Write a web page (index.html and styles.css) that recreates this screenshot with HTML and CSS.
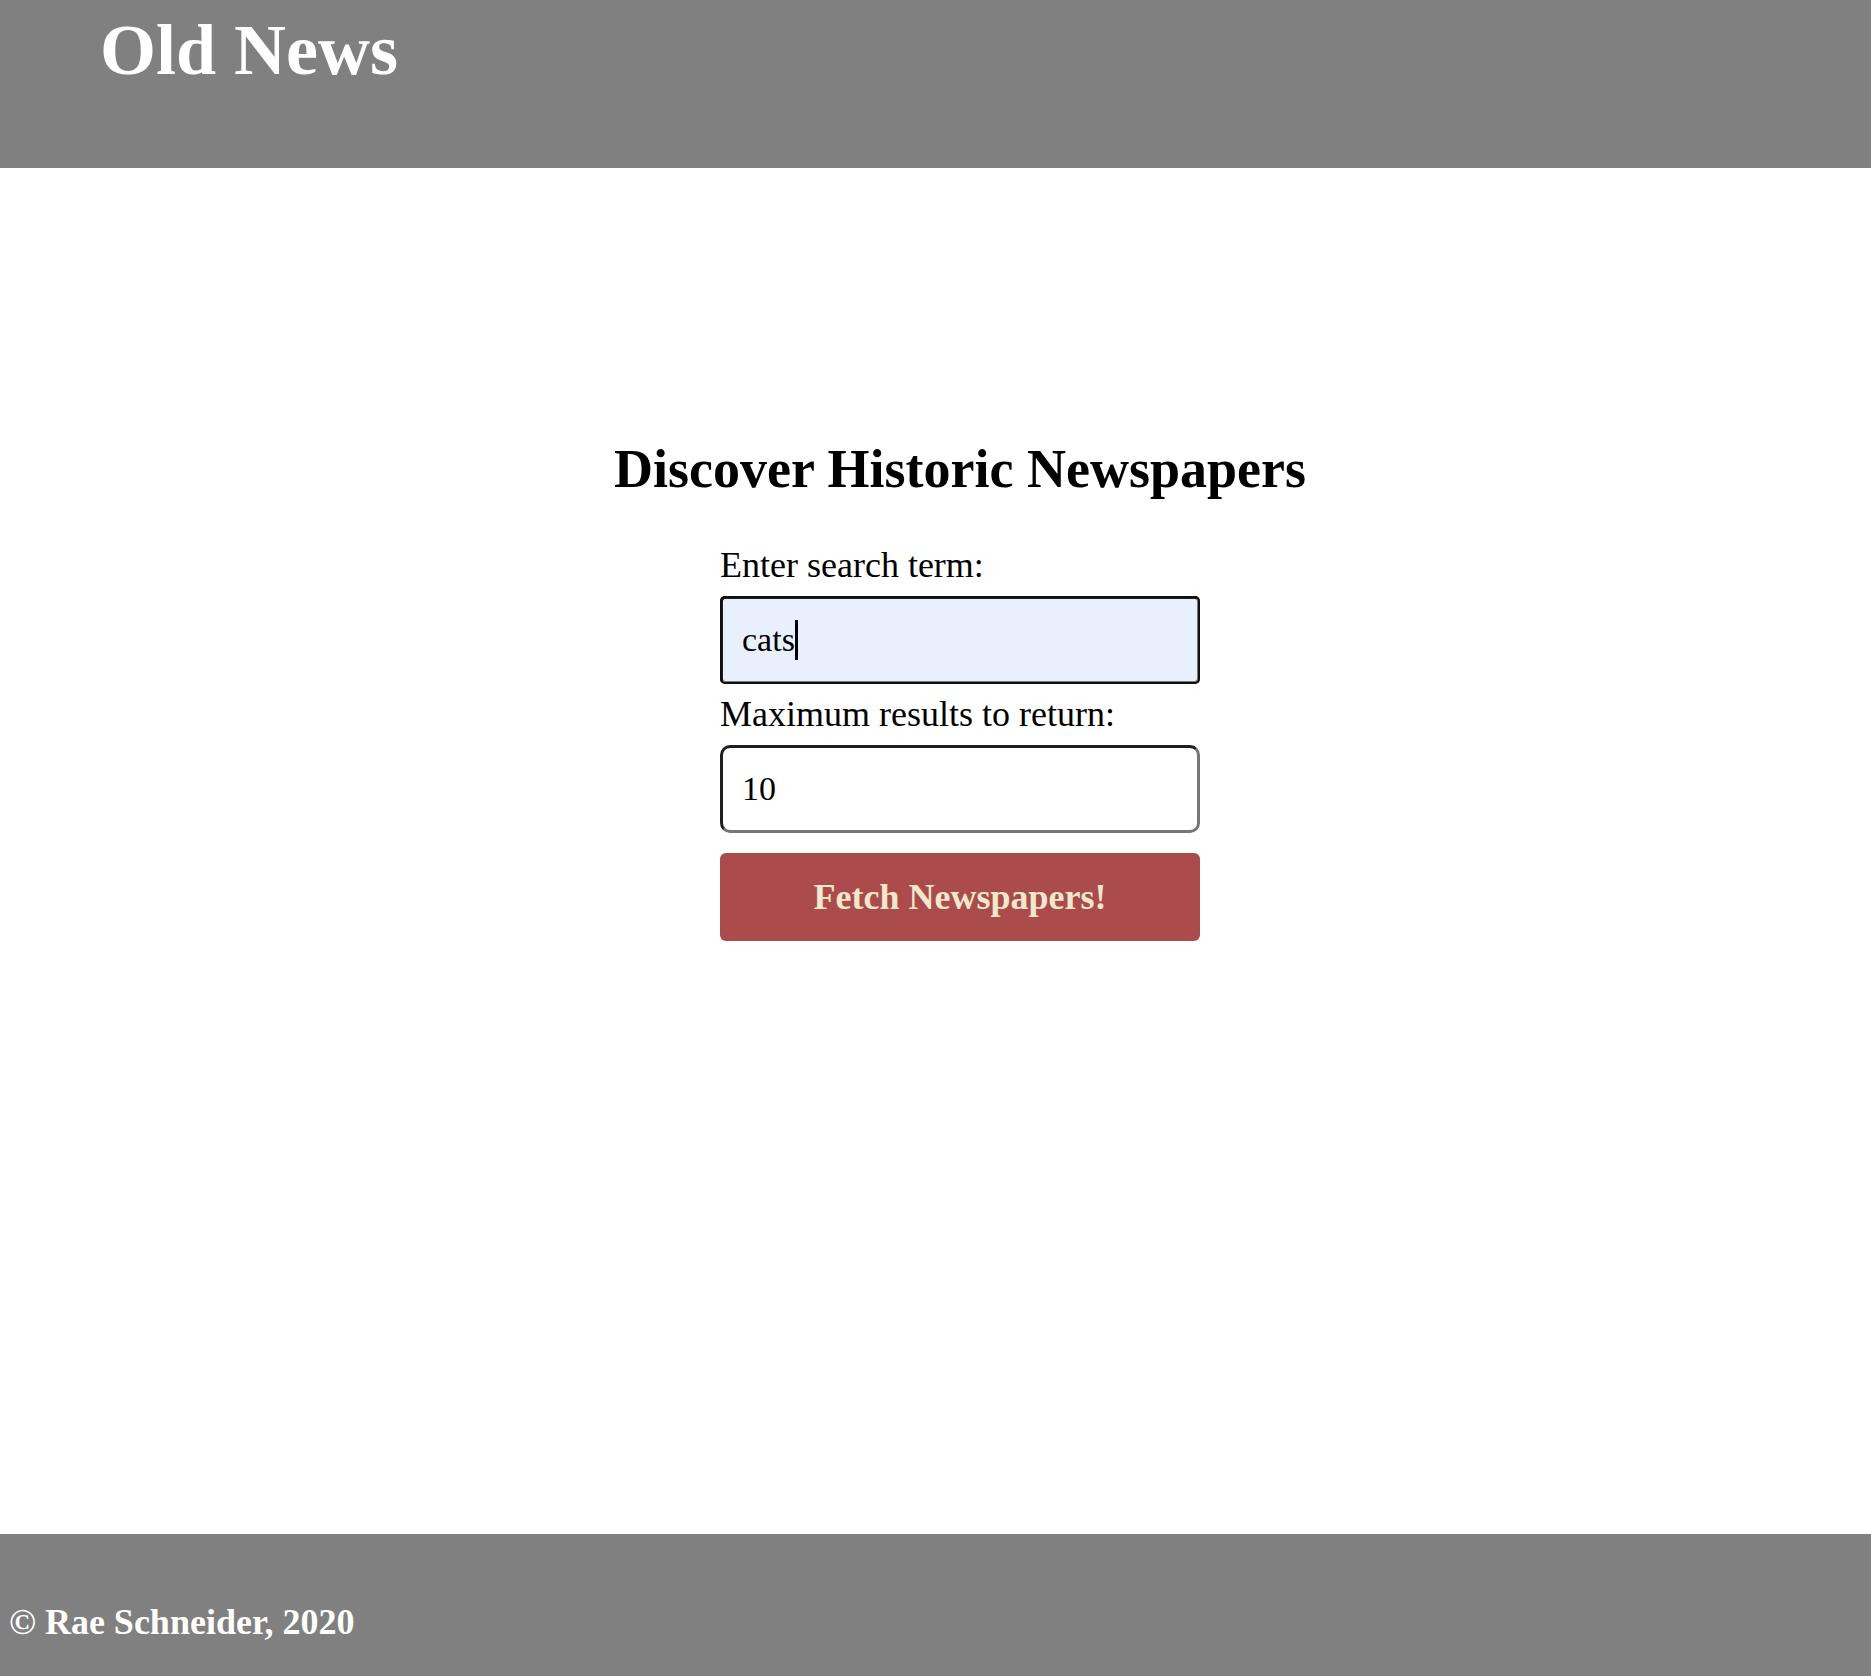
FILE: index.html
```html
<!DOCTYPE html>
<html lang="en">
<head>
<meta charset="utf-8">
<title>Old News</title>
<link rel="stylesheet" href="styles.css">
</head>
<body>
<header class="site-header">
  <h1 class="site-title">Old News</h1>
</header>
<main class="main">
  <h2 class="page-heading">Discover Historic Newspapers</h2>
  <form class="search-form">
    <label class="field-label field-label--first" for="term">Enter search term:</label>
    <div class="field-wrap">
      <input class="field field--focused" id="term" type="text" value="cats">
      <span class="caret"></span>
    </div>
    <label class="field-label" for="max">Maximum results to return:</label>
    <div class="field-wrap">
      <input class="field" id="max" type="text" value="10">
    </div>
    <button class="fetch-btn" type="button">Fetch Newspapers!</button>
  </form>
</main>
<footer class="site-footer">
  <p class="copyright">© Rae Schneider, 2020</p>
</footer>
</body>
</html>
```

FILE: styles.css
```css
html, body {
  margin: 0;
  padding: 0;
}

body {
  font-family: "Liberation Serif", "Times New Roman", serif;
  color: #000;
  background: #fff;
  min-height: 100vh;
  display: flex;
  flex-direction: column;
}

.site-header {
  background: #808080;
  height: 168px;
  box-sizing: border-box;
  padding: 9px 0 0 100px;
}

.site-title {
  margin: 0;
  font-size: 72px;
  line-height: 1.15;
  font-weight: bold;
  color: #fff;
}

.main {
  flex: 1;
  display: flex;
  flex-direction: column;
  align-items: center;
  padding: 270px 0 0 49px;
}

.page-heading {
  margin: 0 0 45px 0;
  font-size: 54px;
  line-height: 1.15;
  font-weight: bold;
}

.search-form {
  width: 480px;
  display: flex;
  flex-direction: column;
}

.field-label {
  font-size: 36px;
  line-height: 1.15;
  margin-bottom: 9px;
}

.field-label--first {
  margin-bottom: 10px;
}

.field-wrap {
  position: relative;
  margin-bottom: 10px;
}

.field {
  display: block;
  width: 100%;
  height: 88px;
  box-sizing: border-box;
  margin: 0;
  padding: 0 19px;
  font-family: "Liberation Serif", "Times New Roman", serif;
  font-size: 34px;
  color: #000;
  background: #fff;
  border-width: 3px;
  border-style: solid;
  border-color: #1f1f1f #767676 #767676 #1f1f1f;
  border-radius: 10px;
  outline: none;
  caret-color: transparent;
}

.field--focused {
  background: #e8f0fe;
  border-radius: 5px;
  outline: 2px solid #101010;
  outline-offset: -2px;
}

.caret {
  position: absolute;
  left: 75px;
  top: 24px;
  width: 3px;
  height: 40px;
  background: #000;
}

.fetch-btn {
  margin-top: 10px;
  height: 88px;
  width: 100%;
  border: none;
  border-radius: 6px;
  background: #ab4b4c;
  color: #f1e7cb;
  font-family: "Liberation Serif", "Times New Roman", serif;
  font-size: 36px;
  font-weight: bold;
  cursor: pointer;
}

.site-footer {
  background: #808080;
  height: 142px;
  box-sizing: border-box;
  padding: 68px 0 0 9px;
}

.copyright {
  margin: 0;
  font-size: 36px;
  line-height: 1.15;
  font-weight: bold;
  color: #fff;
}
```
